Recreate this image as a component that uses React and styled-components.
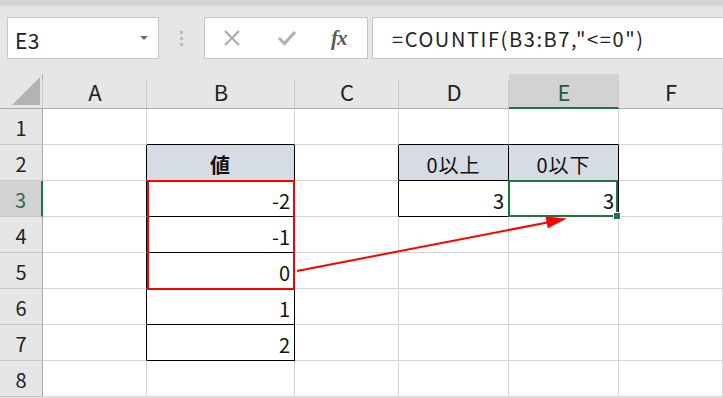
import styled, { createGlobalStyle } from 'styled-components';

const GlobalStyle = createGlobalStyle`
  html, body {
    margin: 0;
    padding: 0;
    background: #ffffff;
    overflow: hidden;
  }
  * {
    box-sizing: border-box;
  }
`;

const FONT = `"Noto Sans CJK JP", "Noto Sans", sans-serif`;
const GREEN = '#217346';
const GRID = '#d4d4d4';

const Page = styled.div`
  width: 723px;
  height: 398px;
  overflow: hidden;
  font-family: ${FONT};
  background: #e6e6e6;
`;

const TopStrip = styled.div`
  height: 7px;
  border-top: 5px solid #d3d3d0;
  background: #dcdcdb;
`;

const Toolbar = styled.div`
  height: 67px;
  display: flex;
  align-items: flex-start;
  padding: 10px 0 0 7px;
`;

const NameBox = styled.div`
  width: 152px;
  height: 42px;
  flex: none;
  background: #fff;
  border: 1px solid #c6c6c6;
  display: flex;
  align-items: center;
  justify-content: space-between;
  padding: 3px 10px 0 7px;
  font-size: 21px;
  letter-spacing: 0.5px;
  color: #222;
`;

const DropArrow = styled.span`
  width: 0;
  height: 0;
  border-left: 4px solid transparent;
  border-right: 4px solid transparent;
  border-top: 4px solid #6a6a6a;
  margin-bottom: 4px;
`;

const Grip = styled.div`
  width: 45px;
  height: 42px;
  flex: none;
  display: flex;
  flex-direction: column;
  align-items: center;
  justify-content: center;
  gap: 3px;
`;

const GripDot = styled.span`
  width: 3px;
  height: 3px;
  background: #b8b8b8;
`;

const FuncBox = styled.div`
  width: 164px;
  height: 42px;
  flex: none;
  background: #fff;
  border: 1px solid #c6c6c6;
  display: flex;
  align-items: center;
  padding-left: 18px;
  gap: 36px;
`;

const Fx = styled.span`
  font-family: "Liberation Serif", serif;
  font-style: italic;
  font-weight: bold;
  font-size: 21px;
  color: #5a5a5a;
  letter-spacing: -1px;
  margin-left: -2px;
`;

const FormulaBox = styled.div`
  flex: 1;
  height: 42px;
  margin-left: 4px;
  margin-right: -4px;
  background: #fff;
  border: 1px solid #c6c6c6;
  display: flex;
  align-items: center;
  padding: 1px 0 0 19px;
  font-size: 20px;
  letter-spacing: 1.6px;
  color: #222;
  white-space: nowrap;
`;

const Sheet = styled.div`
  position: relative;
  display: grid;
  grid-template-columns: 43px 104px 148px 104px 110px 110px 1fr;
  grid-template-rows: 35px repeat(8, 36px);
  background: #fff;
`;

const Corner = styled.div`
  background: #e6e6e6;
  border-right: 1px solid #ababab;
  border-bottom: 1px solid #ababab;
  display: flex;
  align-items: flex-end;
  justify-content: flex-end;
  padding: 0 2px 3px 0;
`;

const ColHead = styled.div`
  background: ${p => (p.$active ? '#d2d2d2' : '#e6e6e6')};
  border-bottom: ${p => (p.$active ? `2px solid ${GREEN}` : '1px solid #ababab')};
  display: flex;
  align-items: center;
  justify-content: center;
  font-size: 22px;
  color: ${p => (p.$active ? '#1d5e3a' : '#222')};
  padding-top: ${p => (p.$active ? '1px' : '0')};
  position: relative;
  &::before {
    content: '';
    position: absolute;
    left: -1px;
    top: 6px;
    bottom: 0;
    width: 1px;
    background: #c8c8c8;
  }
`;

const RowHead = styled.div`
  background: ${p => (p.$active ? '#d2d2d2' : '#e6e6e6')};
  border-right: ${p => (p.$active ? `2px solid ${GREEN}` : '1px solid #ababab')};
  border-bottom: 1px solid #c6c6c6;
  display: flex;
  align-items: center;
  justify-content: center;
  padding-top: 2px;
  font-size: 20px;
  color: ${p => (p.$active ? '#2f6e58' : '#222')};
`;

const Cell = styled.div`
  position: relative;
  border-right: 1px solid ${p => p.$r || GRID};
  border-bottom: 1px solid ${p => p.$b || GRID};
  background: ${p => (p.$head ? '#d6dce4' : '#fff')};
  display: flex;
  align-items: center;
  justify-content: ${p => (p.$head ? 'center' : 'flex-end')};
  padding: 3px 4px 0 0;
  padding-left: ${p => (p.$head ? '4px' : '0')};
  font-size: 20px;
  font-weight: ${p => (p.$bold ? 700 : 400)};
  letter-spacing: ${p => (p.$head ? '1px' : '0')};
  color: #111;
`;

const RedFrame = styled.div`
  position: absolute;
  z-index: 2;
  left: 0;
  top: -1px;
  width: 148px;
  height: 110px;
  border: 2px solid #ff0000;
  pointer-events: none;
`;

const Selection = styled.div`
  position: absolute;
  z-index: 2;
  left: -1px;
  top: -1px;
  right: 0;
  bottom: -1px;
  border: 2px solid ${GREEN};
  pointer-events: none;
`;

const FillHandle = styled.span`
  position: absolute;
  right: -4px;
  bottom: -4px;
  width: 6px;
  height: 6px;
  background: ${GREEN};
  outline: 1px solid #fff;
`;

const ArrowLayer = styled.svg`
  position: absolute;
  z-index: 3;
  left: 0;
  top: 0;
  width: 723px;
  height: 324px;
  pointer-events: none;
  overflow: visible;
`;

const cols = ['A', 'B', 'C', 'D', 'E', 'F'];

const values = {
  B2: { text: '値', head: true, bold: true },
  B3: { text: '-2' },
  B4: { text: '-1' },
  B5: { text: '0' },
  B6: { text: '1' },
  B7: { text: '2' },
  D2: { text: '0以上', head: true },
  E2: { text: '0以下', head: true },
  D3: { text: '3' },
  E3: { text: '3' },
};

// cells inside a bordered table
const boxed = new Set(['B2', 'B3', 'B4', 'B5', 'B6', 'B7', 'D2', 'E2', 'D3', 'E3']);

const ref = (c, r) => `${c}${r}`;
const nextCol = c => cols[cols.indexOf(c) + 1];

function borderColors(c, r) {
  const id = ref(c, r);
  const right = boxed.has(id) || (nextCol(c) && boxed.has(ref(nextCol(c), r)));
  const bottom = boxed.has(id) || boxed.has(ref(c, r + 1));
  return { r: right ? '#000' : undefined, b: bottom ? '#000' : undefined };
}

function CancelIcon() {
  return (
    <svg width="18" height="18" viewBox="0 0 18 18">
      <path d="M2 2 L16 16 M16 2 L2 16" stroke="#b0b0b0" strokeWidth="2.4" fill="none" />
    </svg>
  );
}

function EnterIcon() {
  return (
    <svg width="20" height="16" viewBox="0 0 20 16">
      <path d="M2 8 L7.5 13.5 L18 2" stroke="#b0b0b0" strokeWidth="3" fill="none" />
    </svg>
  );
}

function SelectAll() {
  return (
    <svg width="28" height="28" viewBox="0 0 28 28">
      <polygon points="28,0 28,28 0,28" fill="#b4b4b4" />
    </svg>
  );
}

export default function App() {
  return (
    <Page>
      <GlobalStyle />
      <TopStrip />
      <Toolbar>
        <NameBox>
          E3
          <DropArrow />
        </NameBox>
        <Grip>
          <GripDot />
          <GripDot />
          <GripDot />
        </Grip>
        <FuncBox>
          <CancelIcon />
          <EnterIcon />
          <Fx>fx</Fx>
        </FuncBox>
        <FormulaBox>=COUNTIF(B3:B7,"&lt;=0")</FormulaBox>
      </Toolbar>
      <Sheet>
        <Corner>
          <SelectAll />
        </Corner>
        {cols.map(c => (
          <ColHead key={c} $active={c === 'E'}>{c}</ColHead>
        ))}
        {[1, 2, 3, 4, 5, 6, 7, 8].map(r => (
          <Row key={r} r={r} />
        ))}
        <ArrowLayer viewBox="0 0 723 324">
          <line x1="297" y1="197" x2="550" y2="148" stroke="#ff0000" strokeWidth="2" />
          <polygon points="567,144.5 545.6,142.6 547.8,154.2" fill="#ff0000" />
        </ArrowLayer>
      </Sheet>
    </Page>
  );
}

function Row({ r }) {
  return (
    <>
      <RowHead $active={r === 3}>{r}</RowHead>
      {cols.map(c => {
        const id = ref(c, r);
        const v = values[id];
        const bc = borderColors(c, r);
        return (
          <Cell key={id} $r={bc.r} $b={bc.b} $head={v && v.head} $bold={v && v.bold}>
            {v && v.text}
            {id === 'B3' && <RedFrame />}
            {id === 'E3' && (
              <Selection>
                <FillHandle />
              </Selection>
            )}
          </Cell>
        );
      })}
    </>
  );
}
